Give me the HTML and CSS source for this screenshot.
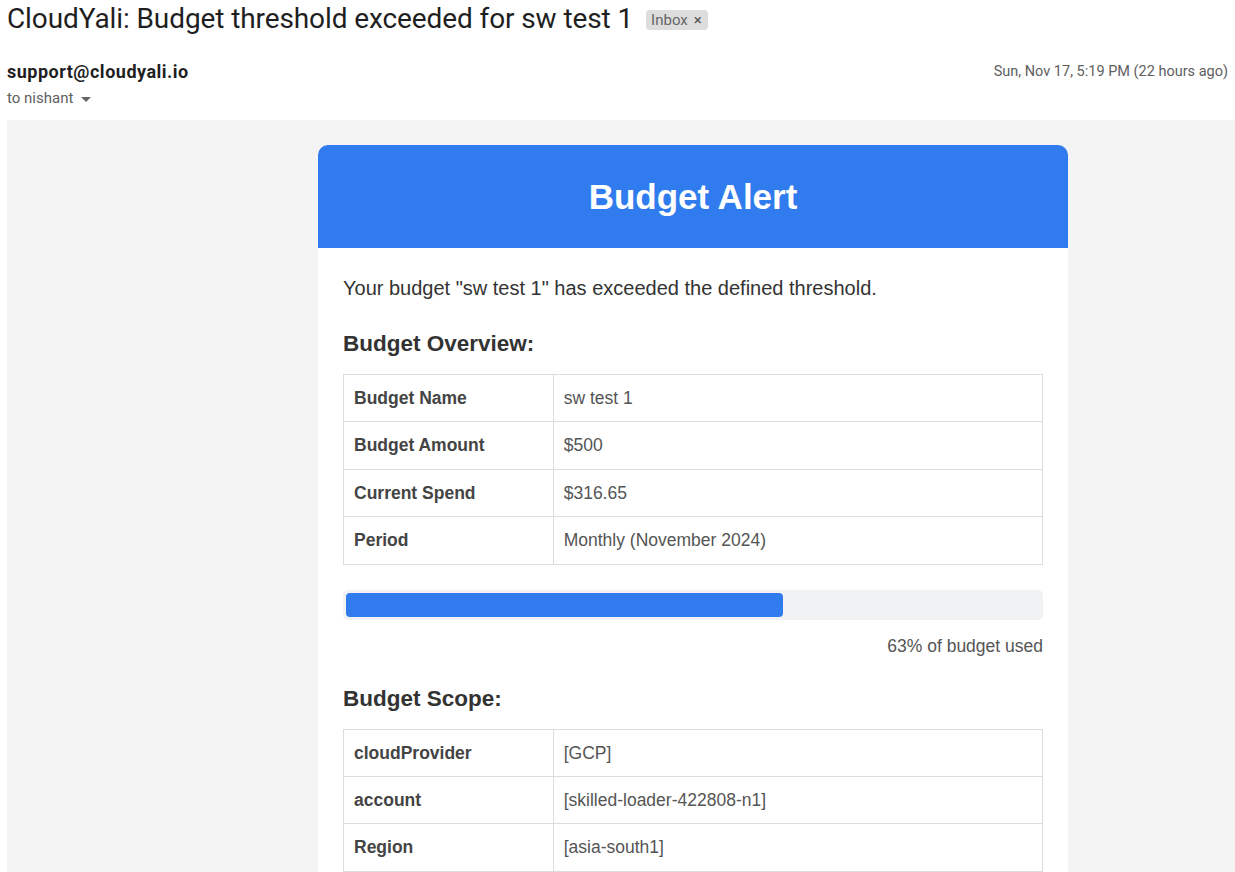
FILE: index.html
```html
<!DOCTYPE html>
<html>
<head>
<meta charset="utf-8">
<link rel="stylesheet" href="styles.css">
</head>
<body>
<div class="page">
  <div class="subject-row">
    <h1 class="subject">CloudYali: Budget threshold exceeded for sw test 1</h1>
    <span class="label-chip">Inbox <span class="chip-x">×</span></span>
  </div>
  <div class="sender-row">
    <div class="sender">
      <div class="from">support@cloudyali.io</div>
      <div class="to">to nishant <span class="caret"></span></div>
    </div>
    <div class="date">Sun, Nov 17, 5:19 PM (22 hours ago)</div>
  </div>
  <div class="mail-body">
    <div class="card">
      <div class="card-header">Budget Alert</div>
      <div class="card-content">
        <p class="intro">Your budget "sw test 1" has exceeded the defined threshold.</p>
        <h3 class="section-title">Budget Overview:</h3>
        <table class="info-table">
          <tr><td class="k">Budget Name</td><td class="v">sw test 1</td></tr>
          <tr><td class="k">Budget Amount</td><td class="v">$500</td></tr>
          <tr><td class="k">Current Spend</td><td class="v">$316.65</td></tr>
          <tr><td class="k">Period</td><td class="v">Monthly (November 2024)</td></tr>
        </table>
        <div class="progress"><div class="progress-fill" style="width:63%"></div></div>
        <div class="progress-label">63% of budget used</div>
        <h3 class="section-title">Budget Scope:</h3>
        <table class="info-table">
          <tr><td class="k">cloudProvider</td><td class="v">[GCP]</td></tr>
          <tr><td class="k">account</td><td class="v">[skilled-loader-422808-n1]</td></tr>
          <tr><td class="k">Region</td><td class="v">[asia-south1]</td></tr>
        </table>
      </div>
    </div>
  </div>
</div>
</body>
</html>
```
FILE: styles.css
```css
html, body {
  margin: 0;
  padding: 0;
  background: #fff;
  overflow: hidden;
}
body {
  font-family: Roboto, "Liberation Sans", Arial, sans-serif;
}
.page {
  padding-left: 7px;
}
.subject-row {
  display: flex;
  align-items: center;
  height: 38px;
  gap: 13px;
}
.subject {
  margin: 0;
  font-family: Roboto, "Open Sans", sans-serif;
  font-weight: 400;
  font-size: 28px;
  line-height: 36px;
  color: #1f1f1f;
  letter-spacing: -0.1px;
}
.label-chip {
  display: inline-flex;
  align-items: center;
  gap: 6px;
  background: #dddddd;
  color: #666;
  border-radius: 4px;
  font-size: 15px;
  line-height: 20px;
  padding: 0 6px 0 5px;
  margin-top: 1px;
}
.chip-x {
  font-size: 15px;
  color: #555;
}
.sender-row {
  display: flex;
  justify-content: space-between;
  align-items: flex-start;
  padding-top: 22px;
  padding-right: 7px;
  height: 82px;
  box-sizing: border-box;
}
.from {
  font-weight: 700;
  font-size: 18px;
  letter-spacing: 0.5px;
  line-height: 24px;
  color: #1f1f1f;
}
.to {
  font-size: 15px;
  line-height: 22px;
  color: #5e5e5e;
  display: flex;
  align-items: center;
  gap: 8px;
  margin-top: 3px;
}
.caret {
  width: 0;
  height: 0;
  border-left: 5px solid transparent;
  border-right: 5px solid transparent;
  border-top: 5px solid #666;
  margin-top: 2px;
}
.date {
  font-size: 14.5px;
  line-height: 24px;
  color: #5e5e5e;
}
.mail-body {
  background: #f4f4f4;
  padding: 25px 0 40px 311px;
}
.card {
  width: 750px;
  background: #fff;
  border-radius: 10px;
  overflow: hidden;
  font-family: "Liberation Sans", Arial, sans-serif;
}
.card-header {
  background: #307cee;
  color: #fff;
  text-align: center;
  font-weight: 700;
  font-size: 35px;
  line-height: 41px;
  padding: 31px 0;
}
.card-content {
  padding: 25px;
}
.intro {
  margin: 0;
  font-size: 20px;
  line-height: 30px;
  color: #333;
}
.section-title {
  margin: 27px 0 16px;
  font-size: 22.5px;
  line-height: 28px;
  font-weight: 700;
  color: #333;
}
.info-table {
  width: 100%;
  border-collapse: collapse;
  font-size: 17.5px;
}
.info-table td {
  border: 1px solid #dddddd;
  padding: 12px 10px;
  line-height: 22.4px;
}
.info-table .k {
  width: 30%;
  font-weight: 700;
  color: #444;
}
.info-table .v {
  color: #555;
}
.progress {
  margin-top: 25px;
  background: #f1f2f4;
  border-radius: 5px;
  padding: 3px;
  height: 24px;
}
.progress-fill {
  height: 100%;
  background: #307cee;
  border-radius: 4px;
}
.progress-label {
  text-align: right;
  font-size: 17.5px;
  line-height: 24px;
  color: #555;
  margin: 14px 0 2px;
}
```
